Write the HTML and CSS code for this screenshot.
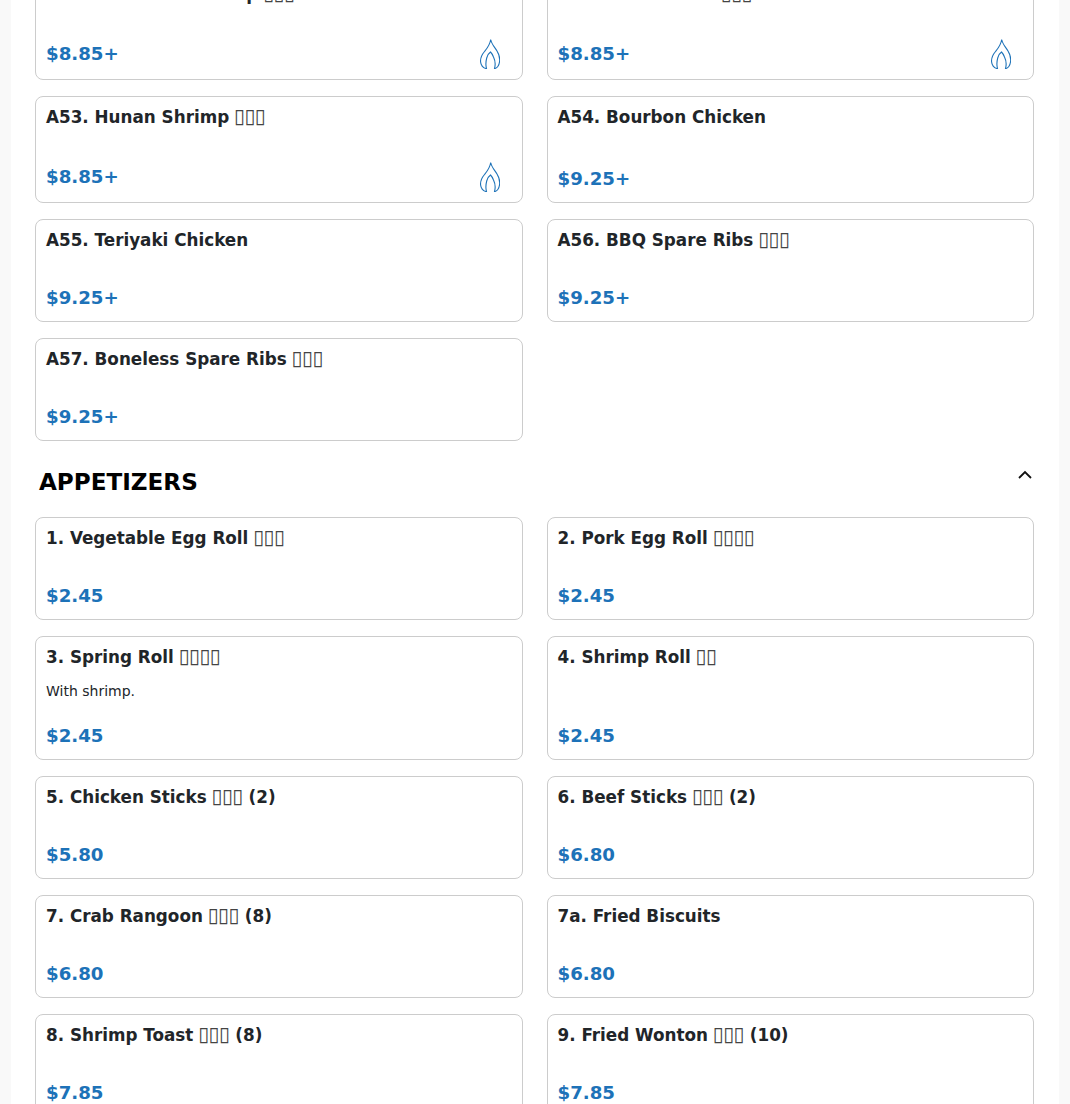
FILE: index.html
```html
<!DOCTYPE html>
<html lang="en">
<head>
    <meta charset="UTF-8">
    <meta name="viewport" content="width=device-width, initial-scale=1.0">
    <title>Menu</title>
    <link rel="stylesheet" href="styles.css">
</head>
<body>
    <svg class="defs" width="0" height="0">
        <symbol id="flame" viewBox="0 0 20 30">
            <path d="M10.700 0.500C11.500 5 14.500 8 17 12C19.500 16 20 20 19.500 23C19 26.500 17 29 14.500 29.700C15.500 26 15 21 13.500 18C12.500 15.500 11.500 14 10.500 13C9 14 7.500 16 6.700 19C5.800 22.500 5.500 26 6.500 29.700C3.500 29 1 26.500 0.600 23C0.200 19 2 15.500 4.500 12.500C7 9.500 10 6 10.700 0.500Z"/>
        </symbol>
    </svg>

    <div class="page">
        <!-- Previous section, scrolled partly out of view -->
        <div class="menu-grid">
            <div class="item">
                <h3>A51. Szechuan Shrimp <span class="zh">▯▯▯</span></h3>
                <div class="item-footer">
                    <span class="price">$8.85+</span>
                    <svg class="flame"><use href="#flame"/></svg>
                </div>
            </div>
            <div class="item">
                <h3>A52. Hunan Beef <span class="zh">▯▯▯</span></h3>
                <div class="item-footer">
                    <span class="price">$8.85+</span>
                    <svg class="flame"><use href="#flame"/></svg>
                </div>
            </div>
            <div class="item">
                <h3>A53. Hunan Shrimp <span class="zh">▯▯▯</span></h3>
                <div class="item-footer">
                    <span class="price">$8.85+</span>
                    <svg class="flame"><use href="#flame"/></svg>
                </div>
            </div>
            <div class="item">
                <h3>A54. Bourbon Chicken</h3>
                <div class="item-footer"><span class="price">$9.25+</span></div>
            </div>
            <div class="item">
                <h3>A55. Teriyaki Chicken</h3>
                <div class="item-footer"><span class="price">$9.25+</span></div>
            </div>
            <div class="item">
                <h3>A56. BBQ Spare Ribs <span class="zh">▯▯▯</span></h3>
                <div class="item-footer"><span class="price">$9.25+</span></div>
            </div>
            <div class="item">
                <h3>A57. Boneless Spare Ribs <span class="zh">▯▯▯</span></h3>
                <div class="item-footer"><span class="price">$9.25+</span></div>
            </div>
        </div>

        <div class="section-head">
            <h2>APPETIZERS</h2>
            <svg class="chevron" viewBox="0 0 16 16"><path d="M2 11L8 5L14 11"/></svg>
        </div>

        <div class="menu-grid">
            <div class="item">
                <h3>1. Vegetable Egg Roll <span class="zh">▯▯▯</span></h3>
                <div class="item-footer"><span class="price">$2.45</span></div>
            </div>
            <div class="item">
                <h3>2. Pork Egg Roll <span class="zh">▯▯▯▯</span></h3>
                <div class="item-footer"><span class="price">$2.45</span></div>
            </div>
            <div class="item">
                <h3>3. Spring Roll <span class="zh">▯▯▯▯</span></h3>
                <p>With shrimp.</p>
                <div class="item-footer"><span class="price">$2.45</span></div>
            </div>
            <div class="item">
                <h3>4. Shrimp Roll <span class="zh">▯▯</span></h3>
                <div class="item-footer"><span class="price">$2.45</span></div>
            </div>
            <div class="item">
                <h3>5. Chicken Sticks <span class="zh">▯▯▯</span> (2)</h3>
                <div class="item-footer"><span class="price">$5.80</span></div>
            </div>
            <div class="item">
                <h3>6. Beef Sticks <span class="zh">▯▯▯</span> (2)</h3>
                <div class="item-footer"><span class="price">$6.80</span></div>
            </div>
            <div class="item">
                <h3>7. Crab Rangoon <span class="zh">▯▯▯</span> (8)</h3>
                <div class="item-footer"><span class="price">$6.80</span></div>
            </div>
            <div class="item">
                <h3>7a. Fried Biscuits</h3>
                <div class="item-footer"><span class="price">$6.80</span></div>
            </div>
            <div class="item">
                <h3>8. Shrimp Toast <span class="zh">▯▯▯</span> (8)</h3>
                <div class="item-footer"><span class="price">$7.85</span></div>
            </div>
            <div class="item">
                <h3>9. Fried Wonton <span class="zh">▯▯▯</span> (10)</h3>
                <div class="item-footer"><span class="price">$7.85</span></div>
            </div>
        </div>
    </div>
</body>
</html>
```

FILE: styles.css
```css
html, body {
    height: 1104px;
    overflow: hidden;
}

body {
    font-family: "DejaVu Sans", sans-serif;
    background-color: #f9f9f9;
    margin: 0;
}

.defs {
    display: block;
    height: 0;
}

.page {
    background-color: #ffffff;
    width: 1048px;
    min-height: 1300px;
    margin: -27px 0 0 11px;
    padding: 0 25px 0 24px;
    box-sizing: border-box;
}

.menu-grid {
    display: grid;
    grid-template-columns: 1fr 1fr;
    gap: 16px 24px;
}

.item {
    display: flex;
    flex-direction: column;
    background-color: #ffffff;
    border: 1px solid #cccccc;
    border-radius: 8px;
    padding: 10px;
}

.item h3 {
    font-size: 16.8px;
    font-weight: 700;
    line-height: 21px;
    margin: 0 0 13px;
    color: #212529;
}

/* boxes where the dish name has no glyphs */
.item h3 .zh {
    font-size: 20px;
    font-weight: 400;
    line-height: 0;
    letter-spacing: -0.6px;
    margin-left: -1px;
    color: #444444;
}

.item p {
    font-size: 14px;
    line-height: 21px;
    margin: 0;
    color: #212529;
}

.item-footer {
    display: flex;
    align-items: center;
    justify-content: space-between;
    margin-top: auto;
    padding: 22px 0 1px;
}

.price {
    font-size: 18.2px;
    font-weight: 700;
    line-height: 24px;
    color: #1d72b8;
}

.flame {
    width: 20px;
    height: 30px;
    margin: -1px 12px -1px 0;
    fill: none;
    stroke: #1d72b8;
    stroke-width: 1.1;
}

.section-head {
    display: flex;
    align-items: flex-start;
    justify-content: space-between;
    margin: 24px 0 18px;
    padding: 0 0 0 4px;
}

.section-head h2 {
    font-size: 23.1px;
    font-weight: 700;
    line-height: 34px;
    margin: 0;
    color: #000000;
}

.chevron {
    width: 16px;
    height: 16px;
    margin: 2px 1px 0 0;
    fill: none;
    stroke: #111111;
    stroke-width: 1.8;
}
```
